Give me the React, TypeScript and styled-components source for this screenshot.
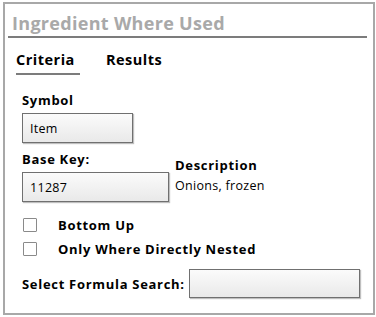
import styled, { createGlobalStyle } from "styled-components";

const GlobalStyle = createGlobalStyle`
  body {
    margin: 0;
    background: #ffffff;
    font-family: "Open Sans", Lato, sans-serif;
  }
`;

const Panel = styled.div`
  box-sizing: border-box;
  width: 372px;
  height: 313px;
  margin: 2px 0 0 3px;
  border: 2px solid #a8a8a8;
  background: #ffffff;
  padding: 0 6px 0 3px;
`;

const Title = styled.div`
  font-size: 18px;
  font-weight: 700;
  letter-spacing: 0.3px;
  color: #a9a9a9;
  padding: 6px 0 0 4px;
  height: 26px;
  line-height: 26px;
  border-bottom: 2px solid #7c7c7c;
`;

const Tabs = styled.div`
  display: flex;
  gap: 26px;
  padding: 12px 0 0 8px;
`;

const Tab = styled.div<{ $active?: boolean }>`
  font-size: 14.5px;
  font-weight: 700;
  letter-spacing: 0.5px;
  color: #000;
  padding: 0 5px 3px 0;
  line-height: 20px;
  border-bottom: 2px solid ${(p) => (p.$active ? "#7c7c7c" : "transparent")};
`;

const Form = styled.div`
  display: flex;
  flex-direction: column;
  padding: 16px 0 0 14px;
`;

const Label = styled.div`
  font-size: 13px;
  font-weight: 700;
  letter-spacing: 0.7px;
  color: #000;
  line-height: 18px;
`;

const Field = styled.div<{ $w: number; $h?: number }>`
  box-sizing: border-box;
  width: ${(p) => p.$w}px;
  height: ${(p) => p.$h ?? 30}px;
  border: 1px solid #707070;
  background: linear-gradient(#fbfbfb, #e9e9e9);
  box-shadow: 1px 1px 1px rgba(0, 0, 0, 0.25);
  font-size: 12.5px;
  letter-spacing: 0.3px;
  color: #000;
  display: flex;
  align-items: center;
  padding-left: 7px;
`;

const Row = styled.div`
  display: flex;
  gap: 6px;
  margin-top: 7px;
`;

const Col = styled.div<{ $gap?: number; $pt?: number }>`
  display: flex;
  flex-direction: column;
  gap: ${(p) => p.$gap ?? 4}px;
  padding-top: ${(p) => p.$pt ?? 0}px;
`;

const Text = styled.div`
  font-size: 12.5px;
  letter-spacing: 0.3px;
  color: #000;
  line-height: 18px;
`;

const Checks = styled.div`
  display: flex;
  flex-direction: column;
  gap: 6px;
  margin-top: 14px;
`;

const Check = styled.label`
  display: flex;
  align-items: center;
  gap: 21px;
  font-size: 13px;
  font-weight: 700;
  letter-spacing: 0.7px;
  color: #000;
  padding-left: 1px;
  line-height: 18px;
`;

const Box = styled.span`
  box-sizing: border-box;
  width: 14px;
  height: 14px;
  border: 1px solid #8a8a8a;
  border-radius: 1px;
  background: #fff;
`;

const SearchRow = styled.div`
  display: flex;
  align-items: center;
  gap: 4px;
  margin-top: 11px;
`;

export default function App() {
  return (
    <>
      <GlobalStyle />
      <Panel>
        <Title>Ingredient Where Used</Title>
        <Tabs>
          <Tab $active>Criteria</Tab>
          <Tab>Results</Tab>
        </Tabs>
        <Form>
          <Col>
            <Label>Symbol</Label>
            <Field $w={111}>Item</Field>
          </Col>
          <Row>
            <Col>
              <Label>Base Key:</Label>
              <Field $w={147}>11287</Field>
            </Col>
            <Col $gap={3} $pt={6}>
              <Label>Description</Label>
              <Text>Onions, frozen</Text>
            </Col>
          </Row>
          <Checks>
            <Check><Box />Bottom Up</Check>
            <Check><Box />Only Where Directly Nested</Check>
          </Checks>
          <SearchRow>
            <Label>Select Formula Search:</Label>
            <Field $w={171} $h={29} />
          </SearchRow>
        </Form>
      </Panel>
    </>
  );
}
